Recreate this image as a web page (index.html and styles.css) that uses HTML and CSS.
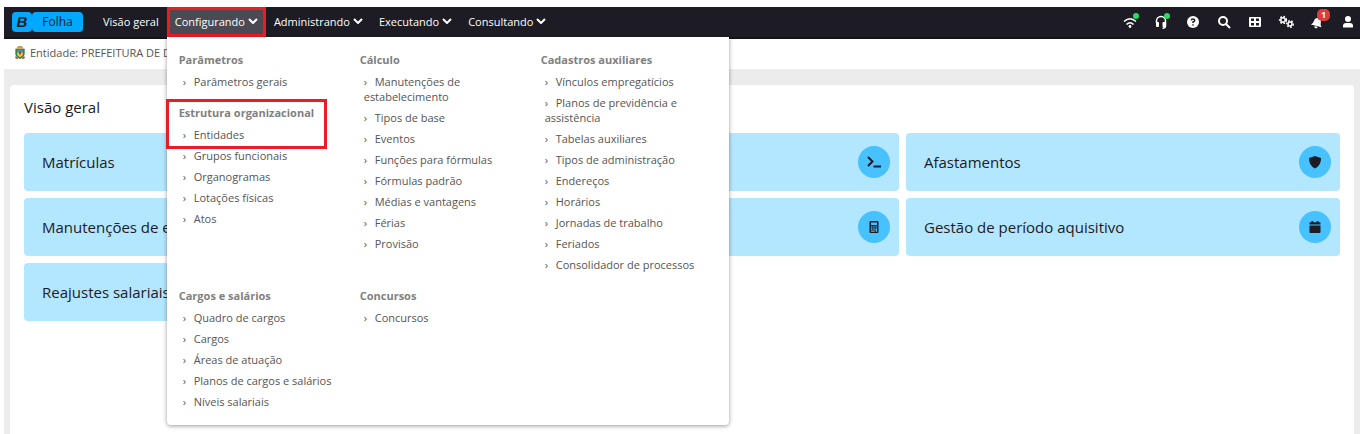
FILE: index.html
```html
<!DOCTYPE html>
<html lang="pt-BR">
<head>
    <meta charset="UTF-8">
    <meta name="viewport" content="width=device-width, initial-scale=1.0">
    <title>Folha</title>
    <link rel="stylesheet" href="styles.css">
</head>
<body>
    <header class="navbar">
        <a href="#" class="brand">
            <span class="brand-mark">B</span><span class="brand-name">Folha</span>
        </a>
        <nav class="main-nav">
            <a href="#" class="nav-item">Visão geral</a>
            <div class="dropdown">
                <button type="button" class="nav-item active" aria-expanded="true">Configurando
                    <svg class="caret" viewBox="0 0 10 6"><path d="M1 1l4 4 4-4"/></svg>
                </button>
                <div class="mega-menu">
                    <div class="menu-col">
                        <section>
                            <h3>Parâmetros</h3>
                            <ul>
                                <li><a href="#">Parâmetros gerais</a></li>
                            </ul>
                        </section>
                        <section class="highlighted">
                            <h3>Estrutura organizacional</h3>
                            <ul>
                                <li><a href="#">Entidades</a></li>
                                <li><a href="#">Grupos funcionais</a></li>
                                <li><a href="#">Organogramas</a></li>
                                <li><a href="#">Lotações físicas</a></li>
                                <li><a href="#">Atos</a></li>
                            </ul>
                        </section>
                    </div>
                    <div class="menu-col">
                        <section>
                            <h3>Cálculo</h3>
                            <ul>
                                <li><a href="#">Manutenções de estabelecimento</a></li>
                                <li><a href="#">Tipos de base</a></li>
                                <li><a href="#">Eventos</a></li>
                                <li><a href="#">Funções para fórmulas</a></li>
                                <li><a href="#">Fórmulas padrão</a></li>
                                <li><a href="#">Médias e vantagens</a></li>
                                <li><a href="#">Férias</a></li>
                                <li><a href="#">Provisão</a></li>
                            </ul>
                        </section>
                    </div>
                    <div class="menu-col">
                        <section>
                            <h3>Cadastros auxiliares</h3>
                            <ul>
                                <li><a href="#">Vínculos empregatícios</a></li>
                                <li><a href="#">Planos de previdência e assistência</a></li>
                                <li><a href="#">Tabelas auxiliares</a></li>
                                <li><a href="#">Tipos de administração</a></li>
                                <li><a href="#">Endereços</a></li>
                                <li><a href="#">Horários</a></li>
                                <li><a href="#">Jornadas de trabalho</a></li>
                                <li><a href="#">Feriados</a></li>
                                <li><a href="#">Consolidador de processos</a></li>
                            </ul>
                        </section>
                    </div>
                    <div class="menu-col">
                        <section>
                            <h3>Cargos e salários</h3>
                            <ul>
                                <li><a href="#">Quadro de cargos</a></li>
                                <li><a href="#">Cargos</a></li>
                                <li><a href="#">Áreas de atuação</a></li>
                                <li><a href="#">Planos de cargos e salários</a></li>
                                <li><a href="#">Níveis salariais</a></li>
                            </ul>
                        </section>
                    </div>
                    <div class="menu-col">
                        <section>
                            <h3>Concursos</h3>
                            <ul>
                                <li><a href="#">Concursos</a></li>
                            </ul>
                        </section>
                    </div>
                </div>
            </div>
            <button type="button" class="nav-item">Administrando
                <svg class="caret" viewBox="0 0 10 6"><path d="M1 1l4 4 4-4"/></svg>
            </button>
            <button type="button" class="nav-item">Executando
                <svg class="caret" viewBox="0 0 10 6"><path d="M1 1l4 4 4-4"/></svg>
            </button>
            <button type="button" class="nav-item">Consultando
                <svg class="caret" viewBox="0 0 10 6"><path d="M1 1l4 4 4-4"/></svg>
            </button>
        </nav>
        <div class="tools">
            <button type="button" class="tool" aria-label="Conexão">
                <svg viewBox="0 0 16 16"><path class="line thin" d="M1 7.500Q7 2 13 7.500M3.500 10.500Q7 7 10.500 10.500"/><circle cx="7" cy="12.500" r="1.400"/></svg>
                <span class="dot"></span>
            </button>
            <button type="button" class="tool" aria-label="Suporte">
                <svg viewBox="0 0 16 16"><path class="line thin" d="M2.500 9V7a4.500 4.500 0 0 1 9 0v5q0 2-3 2.200"/><rect x="2" y="8" width="3" height="5" rx="1"/><rect x="8.500" y="8" width="3" height="5" rx="1"/></svg>
                <span class="dot"></span>
            </button>
            <button type="button" class="tool" aria-label="Ajuda">
                <svg viewBox="0 0 16 16"><circle cx="8" cy="8" r="6"/><path class="cut" d="M6.300 6.500Q6.400 5 8 5t1.700 1.400Q9.700 7.300 8 8v1M8 10.200v1.400"/></svg>
            </button>
            <button type="button" class="tool" aria-label="Pesquisar">
                <svg viewBox="0 0 16 16"><circle class="line" cx="7" cy="7" r="4"/><path class="line" d="M10 10l4 4"/></svg>
            </button>
            <button type="button" class="tool" aria-label="Sistemas">
                <svg viewBox="0 0 16 16"><path fill-rule="evenodd" d="M3 3h10a1 1 0 0 1 1 1v8a1 1 0 0 1-1 1H3a1 1 0 0 1-1-1V4a1 1 0 0 1 1-1zM4 4.500V7h3V4.500zM9 4.500V7h3V4.500zM4 9v2.500h3V9zM9 9v2.500h3V9z"/></svg>
            </button>
            <button type="button" class="tool" aria-label="Configurações">
                <svg viewBox="0 0 16 16"><circle class="line thin" cx="5" cy="6" r="2.200"/><circle class="line teeth" cx="5" cy="6" r="3.400"/><circle class="line thin" cx="12" cy="10" r="2"/><circle class="line teeth" cx="12" cy="10" r="3.200"/></svg>
            </button>
            <button type="button" class="tool" aria-label="Notificações">
                <svg viewBox="0 0 16 16"><path transform="rotate(15 8 9)" d="M2.500 12Q4.500 10 4.500 7.500 4.500 4 8 4t3.500 3.500q0 2.500 2 4.500zM6.200 12.700h3.600Q9.400 14.500 8 14.500t-1.800-1.800z"/></svg>
                <span class="badge">1</span>
            </button>
            <button type="button" class="tool" aria-label="Usuário">
                <svg viewBox="0 0 16 16"><circle cx="8" cy="5" r="3"/><path d="M3 13.500V12q0-3 3-3h4q3 0 3 3v1.500z"/></svg>
            </button>
        </div>
    </header>

    <div class="entity-bar">
        <svg class="crest" viewBox="0 0 12 16">
            <path fill="#3d7f4a" d="M1 4h10v5q0 4-5 6-5-2-5-6z"/>
            <path fill="#c9a04e" d="M4 1h4l2 3H2z"/>
            <path fill="#3f93c6" d="M3 5h6v3H3z"/>
            <path fill="#e9cf4c" d="M3 8h6v2q0 1-3 3-3-2-3-3z"/>
            <path fill="#b8382f" d="M5 7h2v3H5zM1 12l3 2-1 1-2-1zM11 12l-3 2 1 1 2-1z"/>
        </svg>
        <span>Entidade: PREFEITURA DE DI</span>
    </div>

    <main>
        <div class="panel">
            <h1>Visão geral</h1>
            <div class="cards">
                <a href="#" class="card">Matrículas</a>
                <a href="#" class="card" aria-label="Fórmulas">
                    <span class="card-icon"><svg viewBox="0 0 16 16"><path class="stroke" d="M2 3l4.500 4.500L2 12M7.500 12.500H15"/></svg></span>
                </a>
                <a href="#" class="card">Afastamentos
                    <span class="card-icon"><svg viewBox="0 0 16 16"><path d="M8 2l6 2q.5 7-6 10.500Q1.500 11 2 4z"/></svg></span>
                </a>
                <a href="#" class="card">Manutenções de estabelecimento</a>
                <a href="#" class="card" aria-label="Cálculo">
                    <span class="card-icon"><svg viewBox="0 0 16 16"><path fill-rule="evenodd" d="M4.500 2h7a1 1 0 0 1 1 1v10a1 1 0 0 1-1 1h-7a1 1 0 0 1-1-1V3a1 1 0 0 1 1-1zM5 3.500V6h6V3.500zM5 7.200v1.400h1.400V7.200zM7.300 7.200v1.400h1.400V7.200zM9.600 7.200v1.400H11V7.200zM5 9.300v1.400h1.400V9.300zM7.300 9.300v1.400h1.400V9.300zM5 11.400v1.300h3.700v-1.300zM9.600 9.300v3.400H11V9.300z"/></svg></span>
                </a>
                <a href="#" class="card">Gestão de período aquisitivo
                    <span class="card-icon"><svg viewBox="0 0 16 16"><path d="M2.500 5.500V4.300a1 1 0 0 1 1-1h1V2h1.700v1.300h3.600V2h1.700v1.300h1a1 1 0 0 1 1 1v1.200zM2.500 6.500h11V13a1 1 0 0 1-1 1h-9a1 1 0 0 1-1-1z"/></svg></span>
                </a>
                <a href="#" class="card">Reajustes salariais</a>
            </div>
        </div>
    </main>
</body>
</html>
```
FILE: styles.css
```css
*,
*::before,
*::after {
    box-sizing: border-box;
}

body {
    display: flex;
    flex-direction: column;
    min-height: 100vh;
    margin: 0;
    padding: 7px 0 0 4px;
    font-family: "Open Sans", "Noto Sans", sans-serif;
    font-size: 11px;
    line-height: 15px;
    color: #555;
    background-color: white;
}

a {
    color: inherit;
    text-decoration: none;
}

button {
    border: 0;
    padding: 0;
    background: none;
    font: inherit;
    color: inherit;
    cursor: pointer;
}

h1, h3, ul {
    margin: 0;
    padding: 0;
}

/* top bar */
.navbar {
    display: flex;
    align-items: stretch;
    height: 32px;
    padding: 0 4px 0 8px;
    border-bottom: 2px solid #15131c;
    background-color: #1d1b24;
    color: white;
}

.brand {
    display: flex;
    align-items: center;
    margin-right: 12px;
    color: #1d1b24;
}

.brand-mark,
.brand-name {
    height: 20px;
    border-radius: 4px;
    background-color: #00a8ff;
    line-height: 20px;
    text-align: center;
}

.brand-mark {
    width: 20px;
    font-family: "Liberation Sans", Arial, sans-serif;
    font-size: 15px;
    font-weight: bold;
    font-style: italic;
}

.brand-name {
    width: 51px;
    font-size: 12px;
    font-weight: 500;
}

.main-nav {
    display: flex;
}

.dropdown {
    display: flex;
    position: relative;
}

.nav-item {
    display: flex;
    align-items: center;
    gap: 3px;
    padding: 0 8px 2px;
    font-size: 11px;
    white-space: nowrap;
}

.nav-item.active {
    background-color: #4b4a52;
    outline: 3px solid #ed1c24;
    outline-offset: -3px;
}

.caret {
    width: 10px;
    height: 6px;
    fill: none;
    stroke: white;
    stroke-width: 2;
}

.tools {
    display: flex;
    align-items: center;
    gap: 15px;
    margin-left: auto;
}

.tool {
    position: relative;
    width: 16px;
    height: 18px;
}

.tool svg {
    display: block;
    width: 16px;
    height: 16px;
    fill: white;
}

.tool .line {
    fill: none;
    stroke: white;
    stroke-width: 2;
}

.tool .thin {
    stroke-width: 1.5;
}

.tool .teeth {
    stroke-dasharray: 1.6 1.6;
    stroke-width: 1.5;
}

.tool .cut {
    fill: none;
    stroke: #1d1b24;
    stroke-width: 1.5;
}

.dot {
    position: absolute;
    top: 0;
    right: 0;
    width: 6px;
    height: 6px;
    border-radius: 50%;
    background-color: #2bd965;
}

.badge {
    position: absolute;
    top: -4px;
    right: -5px;
    width: 13px;
    height: 12px;
    border-radius: 5px;
    background-color: #dc3c3c;
    font-size: 9px;
    font-weight: bold;
    line-height: 12px;
}

/* open menu */
.mega-menu {
    position: absolute;
    z-index: 10;
    top: 100%;
    left: 0;
    display: grid;
    grid-template-columns: repeat(3, 181px);
    width: 562px;
    padding: 15px 7px 0 12px;
    border-radius: 0 0 4px 4px;
    background-color: white;
    box-shadow: 0 1px 4px rgba(0, 0, 0, 0.4);
    color: #555;
}

.mega-menu section {
    padding-bottom: 10px;
}

.mega-menu h3 {
    margin-bottom: 7px;
    font-size: 11px;
    line-height: 15px;
    color: #808080;
}

.mega-menu ul {
    list-style: none;
}

.mega-menu li {
    margin-bottom: 6px;
    padding: 0 16px 0 4px;
}

.mega-menu li::before {
    content: "›";
    display: inline-block;
    width: 11px;
}

.highlighted {
    position: relative;
}

/* frame around the heading and its first link */
.highlighted::after {
    content: "";
    position: absolute;
    top: -6px;
    left: -13px;
    width: 161px;
    height: 50px;
    border: 3px solid #ed1c24;
}

/* content */
.entity-bar {
    display: flex;
    align-items: center;
    gap: 4px;
    height: 30px;
    padding: 0 10px 3px;
}

.crest {
    width: 12px;
    height: 15px;
}

main {
    display: flex;
    flex: 1;
    padding: 16px 6px 0;
    background-color: #ececec;
}

.panel {
    flex: 1;
    padding: 12px 14px;
    border-radius: 4px 4px 0 0;
    background-color: white;
    color: #1d1b24;
}

.panel h1 {
    margin-bottom: 15px;
    font-size: 15px;
    font-weight: normal;
    line-height: 21px;
}

.cards {
    display: grid;
    grid-template-columns: repeat(3, 1fr);
    gap: 7px;
}

.card {
    display: flex;
    align-items: center;
    height: 58px;
    padding: 0 9px 0 18px;
    border-radius: 4px;
    background-color: #b3e6ff;
    font-size: 15px;
    line-height: 20px;
}

.card-icon {
    display: flex;
    align-items: center;
    justify-content: center;
    width: 32px;
    height: 32px;
    margin-left: auto;
    border-radius: 50%;
    background-color: #47c2ff;
}

.card-icon svg {
    width: 16px;
    height: 16px;
    fill: #1d1b24;
}

.card-icon .stroke {
    fill: none;
    stroke: #1d1b24;
    stroke-width: 2;
}
```
